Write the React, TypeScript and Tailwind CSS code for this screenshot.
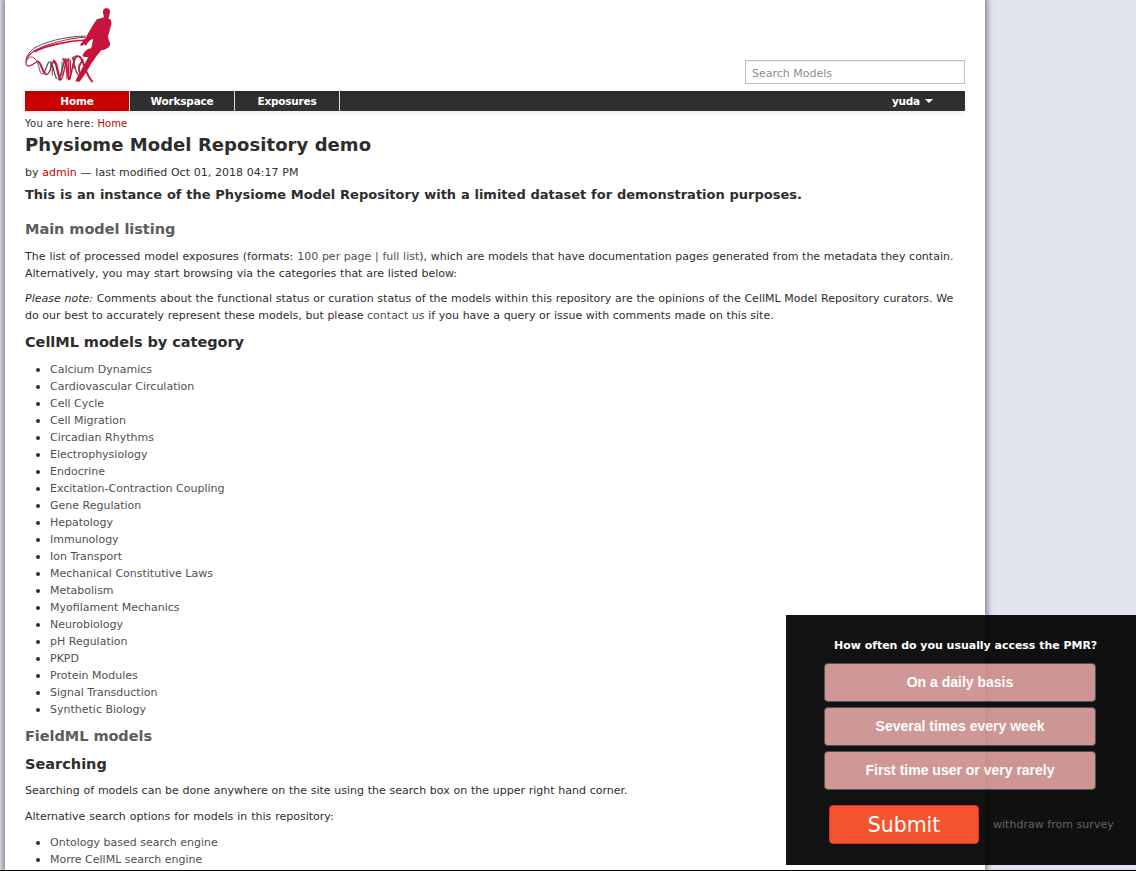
import React from "react";

const categories = [
  "Calcium Dynamics", "Cardiovascular Circulation", "Cell Cycle", "Cell Migration", "Circadian Rhythms",
  "Electrophysiology", "Endocrine", "Excitation-Contraction Coupling", "Gene Regulation", "Hepatology",
  "Immunology", "Ion Transport", "Mechanical Constitutive Laws", "Metabolism", "Myofilament Mechanics",
  "Neurobiology", "pH Regulation", "PKPD", "Protein Modules", "Signal Transduction", "Synthetic Biology",
];

function Logo() {
  return (
    <svg className="block h-[75px] w-[88px]" viewBox="75 23 264 225" fill="none">
      <g stroke="#555">
        <path d="M256 107C210 108 151 119 113 138C89 149 76 169 79 186" strokeWidth="3" />
        <path d="M79 182C86 166 100 166 110 182C118 194 117 218 127 221" strokeWidth="3" />
        <path d="M127 220C137 222 140 186 149 184" strokeWidth="4" />
        <path d="M152 184V213M157 187V226M186 183V229" strokeWidth="3" />
        <path d="M151 184C160 188 160 218 170 235" strokeWidth="4" />
        <path d="M174 238C185 232 187 188 198 174" strokeWidth="5" />
        <path d="M216 170C225 184 222 210 236 226M222 167V205" strokeWidth="4" />
      </g>
      <g stroke="#c8143c">
        <path d="M258 110C205 113 122 135 94 158C79 170 74 190 82 196C89 202 98 190 112 184" strokeWidth="3.5" />
        <path d="M258 119C205 122 138 135 103 154" strokeWidth="5" />
        <path d="M112 183C124 183 126 218 140 223" strokeWidth="6" />
        <path d="M140 223C152 222 153 184 165 181" strokeWidth="3.5" />
        <path d="M158 182C174 180 170 226 183 240" strokeWidth="7" />
        <path d="M181 238C194 238 190 180 207 174" strokeWidth="4" />
        <path d="M187 176C202 176 200 228 209 238" strokeWidth="6" />
        <path d="M201 176V237M206 174V240M211 178V236" strokeWidth="3.5" />
        <path d="M208 238C217 218 217 177 231 167" strokeWidth="5" />
        <path d="M226 169C246 163 246 182 254 200C262 222 268 236 278 245" strokeWidth="6" />
        <path d="M250 178C236 193 230 211 248 228" strokeWidth="5" />
      </g>
      <path fill="#c8143c" d="M310 42C306 28 313 23 322 24C330 25 331 33 329 40C329 47 326 50 325 54C333 57 335 62 334 72L327 98C322 108 324 114 330 127C332 139 322 147 304 150L288 169C280 183 274 188 270 197C260 213 251 229 239 244L226 243C231 230 238 220 244 208L264 172C257 168 254 172 247 168C252 153 263 144 274 144C276 132 278 125 279 116C272 117 261 127 258 138L254 132L244 137L240 133L249 122C257 117 261 103 269 91C276 80 283 66 291 57L312 51Z" />
    </svg>
  );
}

function BulletList({ items }: { items: string[] }) {
  return (
    <ul>
      {items.map((item) => (
        <li key={item} className="flex h-[17px] items-center">
          <span className="mr-[10px] ml-[11px] size-1 rounded-full bg-[#2d2d2d]" />
          <a className="text-[#4f4f4f]">{item}</a>
        </li>
      ))}
    </ul>
  );
}

function Tab({ label, active }: { label: string; active?: boolean }) {
  return (
    <a
      className={
        "flex w-[105px] items-center justify-center border-r border-[#ddd] " +
        (active ? "bg-gradient-to-b from-[#b90000] to-[#cb0000] to-40%" : "")
      }
    >
      {label}
    </a>
  );
}

function Survey() {
  const options = ["On a daily basis", "Several times every week", "First time user or very rarely"];
  return (
    <aside className="absolute top-[615px] left-[786px] h-[250px] w-[350px] bg-black opacity-[0.925]">
      <p className="mt-[22px] pl-[48px] text-[11px] leading-[17px] font-bold tracking-[-0.03px] text-white">
        How often do you usually access the PMR?
      </p>
      <div className="mt-[9px] ml-[38px] flex w-[272px] flex-col gap-[5px]">
        {options.map((o) => (
          <button
            key={o}
            className="h-[39px] rounded-[4px] border border-[#444] bg-[#cc8f8d] font-['Liberation_Sans',Arial,sans-serif] text-[14px] font-bold text-white"
          >
            {o}
          </button>
        ))}
      </div>
      <div className="mt-[15px] ml-[43px] flex items-center">
        <button className="h-[39px] w-[150px] rounded-[4px] border border-[#e0181c] bg-[#f5481e] pt-0.5 text-[20.5px] text-white">
          Submit
        </button>
        <a className="ml-[14px] text-[11px] tracking-[0.03px] text-[#5a5a5a]">withdraw from survey</a>
      </div>
    </aside>
  );
}

export default function App() {
  return (
    <div className="relative h-[871px] w-[1136px] overflow-hidden border-b border-black bg-[#e1e4ee] font-['Verdana','DejaVu_Sans',sans-serif] text-[11px] leading-[17px] whitespace-nowrap text-[#2d2d2d]">
      <main className="ml-[5px] h-[870px] w-[980px] bg-white px-5 shadow-[0_0_6px_2px_#78788a]">
        <header className="flex h-[91px] items-start justify-between">
          <div className="pt-[8px]"><Logo /></div>
          <input
            className="mt-[60px] h-6 w-[220px] border border-[#bfbfbf] px-1.5 pt-0.5 text-[11px] shadow-[inset_0_1px_2px_#eee] placeholder:text-[#8c8c8c]"
            placeholder="Search Models"
          />
        </header>
        <nav className="flex h-5 justify-between rounded-[1px] bg-gradient-to-b from-[#292929] to-[#303030] to-40% text-[10.5px] font-bold tracking-[-0.2px] text-white shadow-[0_2px_5px_#eee]">
          <div className="flex">
            <Tab label="Home" active />
            <Tab label="Workspace" />
            <Tab label="Exposures" />
          </div>
          <div className="mr-8 flex items-center">
            yuda
            <svg className="ml-[5px] h-1 w-2" viewBox="0 0 8 4"><path d="M0 0H8L4 4Z" fill="white" /></svg>
          </div>
        </nav>
        <div className="mt-1 text-[10px]"><span className="tracking-[0.26px]">You are here: </span><a className="text-[#cb0000]">Home</a></div>
        <h1 className="text-[18px] leading-[26px] font-bold tracking-[0.06px]">Physiome Model Repository demo</h1>
        <div className="mt-[6px] text-[11px] [word-spacing:0.3px]">by <a className="text-[#cb0000]">admin</a> — last modified Oct 01, 2018 04:17 PM</div>
        <p className="mt-[5px] text-[13px] font-bold [word-spacing:0.26px]">This is an instance of the Physiome Model Repository with a limited dataset for demonstration purposes.</p>
        <h2 className="mt-[16px] text-[14.5px] leading-5 font-bold tracking-[-0.04px] text-[#5c5c5c]">Main model listing</h2>
        <p className="mt-[9px]">
          <span className="[word-spacing:0.5px]">The list of processed model exposures (formats: </span><span className="[word-spacing:0.2px]"><a className="text-[#4f4f4f]">100 per page</a> <span className="text-[#4f4f4f]">| full list</span>), which are models that have documentation pages generated from the metadata they contain.</span>
          <br />
          <span className="[word-spacing:0.27px]">Alternatively, you may start browsing via the categories that are listed below:</span>
        </p>
        <p className="mt-2 [word-spacing:0.24px]">
          <em>Please note:</em> Comments about the functional status or curation status of the models within this repository are the opinions of the CellML Model Repository curators. We
          <br />
          <span className="[word-spacing:0.14px]">do our best to accurately represent these models, but please <a className="text-[#4f4f4f]">contact us</a> if you have a query or issue with comments made on this site.</span>
        </p>
        <h2 className="mt-[8px] mb-[9px] text-[14.5px] leading-5 font-bold tracking-[-0.04px]">CellML models by category</h2>
        <BulletList items={categories} />
        <h2 className="mt-[8px] text-[14.5px] leading-5 font-bold tracking-[-0.05px] text-[#5c5c5c]">FieldML models</h2>
        <h2 className="mt-[8px] text-[14.5px] leading-5 font-bold">Searching</h2>
        <p className="mt-[8px] [word-spacing:0.24px]">Searching of models can be done anywhere on the site using the search box on the upper right hand corner.</p>
        <p className="mt-[9px] mb-[9px] [word-spacing:0.45px]">Alternative search options for models in this repository:</p>
        <BulletList items={["Ontology based search engine", "Morre CellML search engine"]} />
      </main>
      <Survey />
    </div>
  );
}
